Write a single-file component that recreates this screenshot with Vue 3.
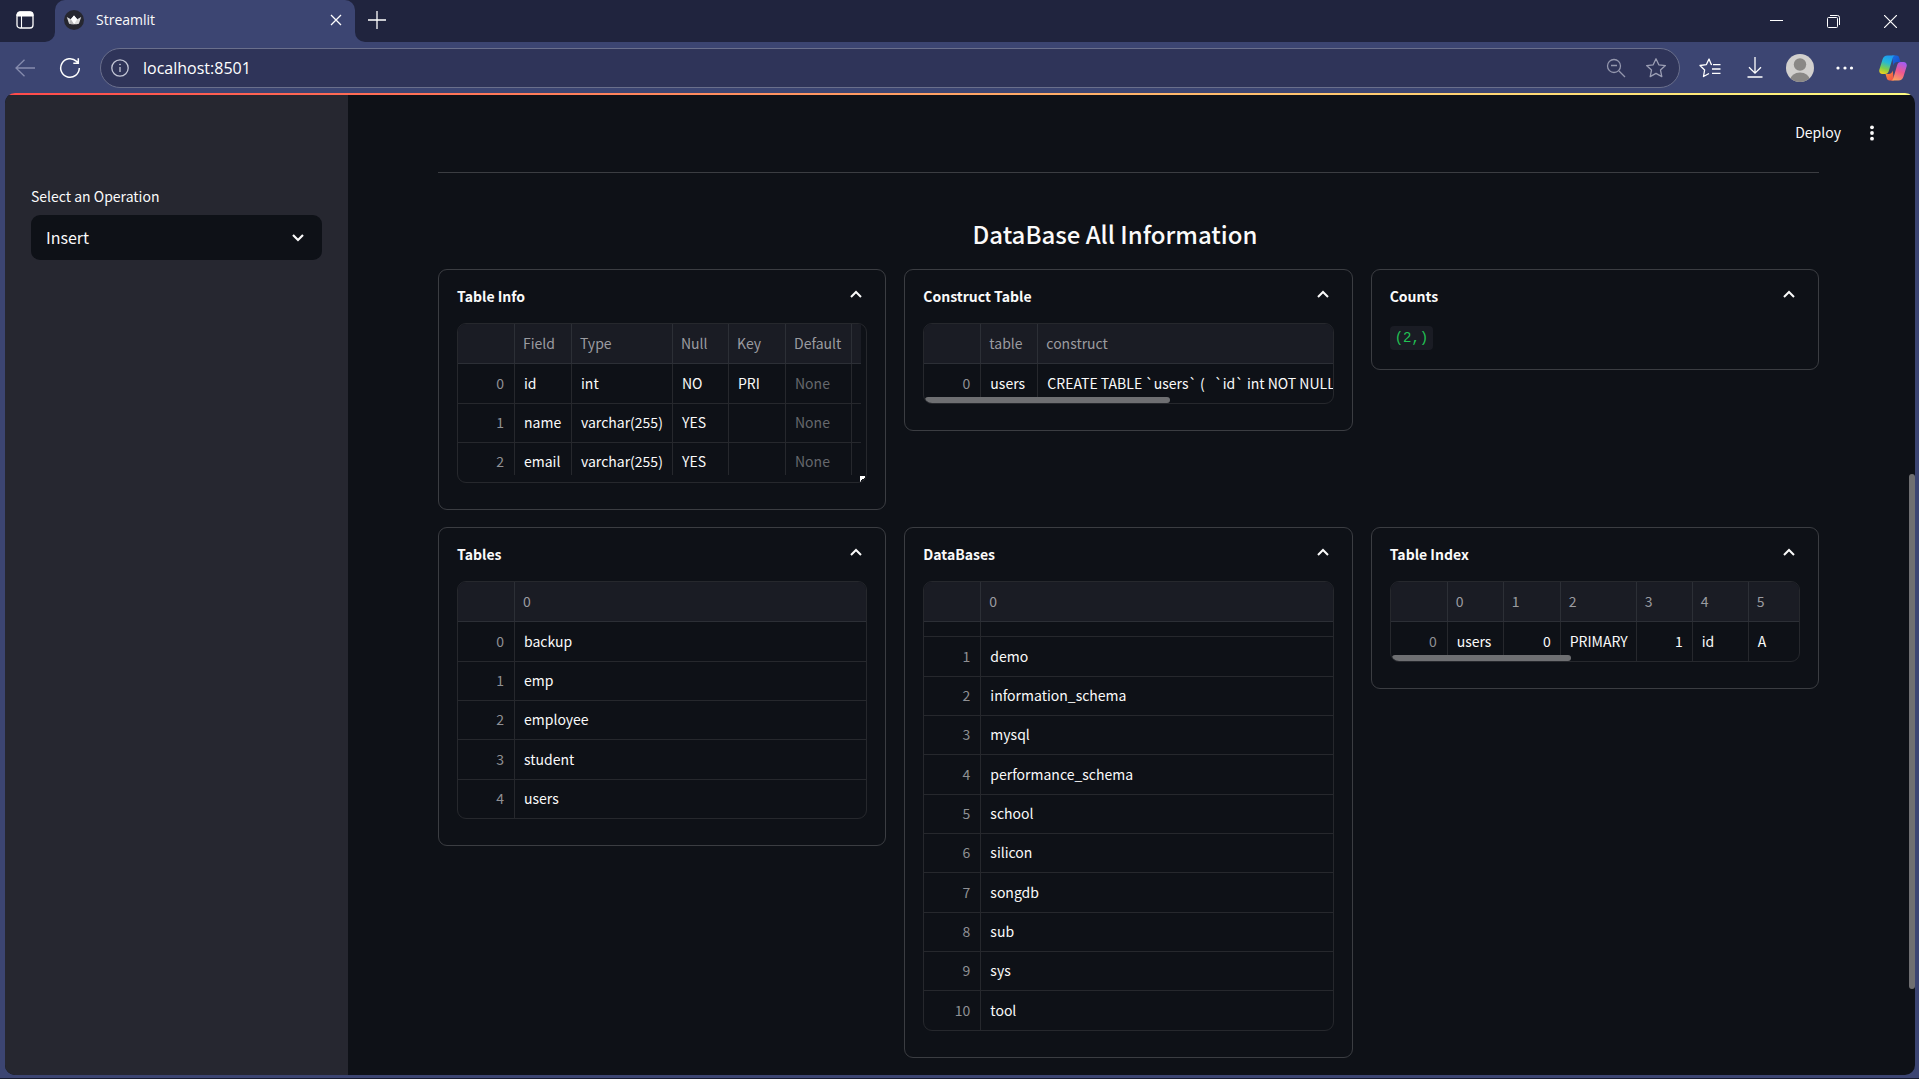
<script setup>
import { ref } from 'vue'

const operation = ref('Insert')
const operations = ['Insert', 'Update', 'Delete', 'Select']

const cards = [
  {
    title: 'Table Info',
    kind: 'resizable',
    widths: [57, 57, 101, 56, 57, 66, 0],
    head: ['', 'Field', 'Type', 'Null', 'Key', 'Default', ''],
    rows: [
      ['0', 'id', 'int', 'NO', 'PRI', 'None', ''],
      ['1', 'name', 'varchar(255)', 'YES', '', 'None', ''],
      ['2', 'email', 'varchar(255)', 'YES', '', 'None', ''],
    ],
  },
  {
    title: 'Construct Table',
    kind: 'wide',
    widths: [57, 57, 0],
    thumb: 60,
    head: ['', 'table', 'construct'],
    rows: [['0', 'users', 'CREATE TABLE `users` (   `id` int NOT NULL']],
  },
  { title: 'Counts', code: '(2,)' },
  {
    title: 'Tables',
    kind: 'plain',
    widths: [57, 0],
    head: ['', '0'],
    rows: [['0', 'backup'], ['1', 'emp'], ['2', 'employee'], ['3', 'student'], ['4', 'users']],
  },
  {
    title: 'DataBases',
    kind: 'scrolled',
    widths: [57, 0],
    head: ['', '0'],
    rows: [
      ['1', 'demo'],
      ['2', 'information_schema'],
      ['3', 'mysql'],
      ['4', 'performance_schema'],
      ['5', 'school'],
      ['6', 'silicon'],
      ['7', 'songdb'],
      ['8', 'sub'],
      ['9', 'sys'],
      ['10', 'tool'],
    ],
  },
  {
    title: 'Table Index',
    kind: 'wide',
    widths: [57, 56, 57, 76, 56, 56, 0],
    thumb: 44,
    numeric: [2, 4],
    head: ['', '0', '1', '2', '3', '4', '5'],
    rows: [['0', 'users', '0', 'PRIMARY', '1', 'id', 'A']],
  },
]

function cellClass(card, text, i) {
  return {
    index: i === 0,
    none: text === 'None',
    number: card.numeric && card.numeric.includes(i),
  }
}
</script>

<template>
  <div class="window">
    <div class="tabstrip">
      <div class="strip-left">
        <button class="icon-btn" aria-label="Tab actions">
          <svg width="20" height="20" viewBox="0 0 20 20" fill="none" stroke="#fff">
            <rect x="2" y="2" width="16" height="16" rx="3" stroke-width="1.3" />
            <path d="M2 6V5a3 3 0 0 1 3-3h10a3 3 0 0 1 3 3v1z" fill="#fff" />
            <path d="M6.5 6v12" stroke-width="1.1" />
          </svg>
        </button>
      </div>
      <div class="tab">
        <svg width="20" height="20" viewBox="0 0 20 20">
          <circle cx="10" cy="10" r="10" fill="#262730" />
          <path d="M2.8 7l4 2.300L10 5.500l3.200 3.800 4-2.300-2.300 6.800c-3 .7-6.800.7-9.800 0z" fill="#dcdcdc" />
          <path d="M10 5.500l3.200 3.800L10 14.200 6.800 9.300z" fill="#fff" />
          <path d="M6.800 9.300l3.200 4.900c-2 0-3.500-.1-4.900-.4z" fill="#b4b4b6" />
        </svg>
        <span class="tab-title">Streamlit</span>
        <button class="icon-btn tab-close" aria-label="Close tab">
          <svg width="12" height="12" viewBox="0 0 12 12" stroke="#fff" stroke-width="1.3"><path d="M1 1l10 10M11 1L1 11" /></svg>
        </button>
      </div>
      <div class="strip-right">
        <button class="icon-btn" aria-label="New tab">
          <svg width="18" height="18" viewBox="0 0 18 18" stroke="#fff" stroke-width="1.3"><path d="M9 0v18M0 9h18" /></svg>
        </button>
        <div class="controls">
          <button class="icon-btn control" aria-label="Minimize">
            <svg width="13" height="13" viewBox="0 0 13 13" stroke="#fff"><path d="M0 5.500h13" /></svg>
          </button>
          <button class="icon-btn control" aria-label="Restore">
            <svg width="14" height="14" viewBox="0 0 14 14" fill="none" stroke="#fff"><rect x=".5" y="3.500" width="10" height="10" rx="1" /><path d="M3 1.500h7.500a2 2 0 0 1 2 2V11" /></svg>
          </button>
          <button class="icon-btn control" aria-label="Close">
            <svg width="13" height="13" viewBox="0 0 13 13" stroke="#fff" stroke-width="1.2"><path d="M0 0l13 13M13 0L0 13" /></svg>
          </button>
        </div>
      </div>
    </div>

    <div class="toolbar">
      <button class="icon-btn tool" aria-label="Back">
        <svg width="20" height="18" viewBox="0 0 20 18" fill="none" stroke="#868cae" stroke-width="1.300"><path d="M20 9H1M9.500.7L1 9l8.500 8.300" /></svg>
      </button>
      <button class="icon-btn tool" aria-label="Refresh">
        <svg width="22" height="22" viewBox="0 0 22 22" fill="none" stroke="#fff" stroke-width="1.500"><path d="M20.300 11a9.300 9.300 0 1 1-2.700-6.600l1.400 1.400M19.300 1.200v5h-5" /></svg>
      </button>
      <div class="address">
        <svg width="18" height="18" viewBox="0 0 18 18" fill="none" stroke="#c3c6d6" stroke-width="1.300"><circle cx="9" cy="9" r="8.200" /><path d="M9 8v5" /><circle cx="9" cy="5.500" r=".5" fill="#c3c6d6" stroke-width=".8" /></svg>
        <input class="url" type="text" value="localhost:8501" aria-label="Address" />
        <button class="icon-btn addr-btn" aria-label="Zoom">
          <svg width="20" height="20" viewBox="0 0 20 20" fill="none" stroke="#9497ae" stroke-width="1.300"><circle cx="8" cy="8" r="6.500" /><path d="M13 13l6 6M5 7.500h6" /></svg>
        </button>
        <button class="icon-btn addr-btn" aria-label="Add to favorites">
          <svg width="22" height="22" viewBox="0 0 22 22" fill="none" stroke="#9b9eb4" stroke-width="1.300" stroke-linejoin="round"><path d="M11 1.800l2.800 6 6.600.8-4.900 4.500 1.300 6.500L11 16.400l-5.800 3.200 1.300-6.500L1.600 8.600l6.600-.8z" /></svg>
        </button>
      </div>
      <button class="icon-btn tool" aria-label="Favorites">
        <svg width="22" height="20" viewBox="0 0 22 20" fill="none" stroke="#fff" stroke-width="1.300" stroke-linejoin="round"><path d="M13 6.500l-.7-.1L10 1 7.400 6.600 1 7.500l4.600 4.500L4.500 18.500 10 15.500M14 6.700h7.500M13 11h8.500M13 15.300h8.500" /></svg>
      </button>
      <button class="icon-btn tool" aria-label="Downloads">
        <svg width="16" height="21" viewBox="0 0 16 21" fill="none" stroke="#fff" stroke-width="1.300"><path d="M8 0v16M2 10.200l6 6 6-6M.5 20h15" /></svg>
      </button>
      <button class="icon-btn tool" aria-label="Profile">
        <svg width="28" height="28" viewBox="0 0 28 28"><clipPath id="avatar"><circle cx="14" cy="14" r="14" /></clipPath><g clip-path="url(#avatar)"><rect width="28" height="28" fill="#d2d0ce" /><circle cx="14" cy="10.500" r="6.200" fill="#8a8886" /><ellipse cx="14" cy="26" rx="9.800" ry="7.500" fill="#8a8886" /></g></svg>
      </button>
      <button class="icon-btn tool" aria-label="Settings">
        <svg width="18" height="4" viewBox="0 0 18 4" fill="#fff"><circle cx="2" cy="2" r="1.600" /><circle cx="9" cy="2" r="1.600" /><circle cx="15.500" cy="2" r="1.600" /></svg>
      </button>
      <button class="icon-btn copilot" aria-label="Copilot">
        <svg width="28" height="26" viewBox="0 0 28 26">
          <defs>
            <linearGradient id="cp-a" x1="0.500" y1="0" x2="0.200" y2="1"><stop offset="0" stop-color="#1f9bf0" /><stop offset=".35" stop-color="#24b8d8" /><stop offset=".7" stop-color="#7fce4a" /><stop offset="1" stop-color="#f5d21c" /></linearGradient>
            <linearGradient id="cp-b" x1=".7" y1="0" x2=".3" y2="1"><stop offset="0" stop-color="#a45cf0" /><stop offset=".5" stop-color="#f0588e" /><stop offset="1" stop-color="#fba35c" /></linearGradient>
            <linearGradient id="cp-c" x1="0" y1="0" x2="1" y2="1"><stop offset="0" stop-color="#1a6fe0" /><stop offset="1" stop-color="#1747c8" /></linearGradient>
            <linearGradient id="cp-d" x1="0" y1="0" x2="1" y2="1"><stop offset="0" stop-color="#ff9838" /><stop offset="1" stop-color="#ee4a4a" /></linearGradient>
          </defs>
          <path d="M13 .5h4.500c1.500 0 2.300.9 2.700 2.200L21.500 7h-3c-2.500 0-3.500 1.200-4.200 3.500z" fill="url(#cp-c)" />
          <path d="M15 25.500h-4.500c-1.500 0-2.300-.9-2.700-2.200L6.500 19h3c2.500 0 3.500-1.200 4.200-3.500z" fill="url(#cp-d)" />
          <path d="M8.500.5h8c-1.700 0-2.500 1.300-3 3L9.800 16c-.6 2-1.700 3-3.600 3H3.500C.8 19-.2 17 .4 14.500L3.500 4.500C4.300 1.800 6 .5 8.500.5z" fill="url(#cp-a)" />
          <path d="M19.500 25.500h-8c1.700 0 2.500-1.300 3-3L18.200 10c.6-2 1.700-3 3.600-3h2.700c2.700 0 3.700 2 3.100 4.500l-3.100 10c-.8 2.700-2.500 4-5 4z" fill="url(#cp-b)" />
        </svg>
      </button>
    </div>

    <div class="app">
      <aside class="sidebar">
        <label class="select-label" for="operation">Select an Operation</label>
        <div class="select-wrap">
          <select id="operation" v-model="operation">
            <option v-for="o in operations" :key="o">{{ o }}</option>
          </select>
          <svg class="select-arrow" width="12" height="8" viewBox="0 0 12 8" fill="none" stroke="#fafafa" stroke-width="2.200"><path d="M1 1l5 5 5-5" /></svg>
        </div>
      </aside>

      <main class="main">
        <header class="app-header">
          <button class="deploy">Deploy</button>
          <button class="icon-btn menu" aria-label="Main menu">
            <svg width="4" height="16" viewBox="0 0 4 16" fill="#fafafa"><circle cx="2" cy="2.300" r="1.900" /><circle cx="2" cy="8" r="1.900" /><circle cx="2" cy="13.700" r="1.900" /></svg>
          </button>
        </header>
        <div class="content">
          <hr />
          <h3>DataBase All Information</h3>
          <div class="grid">
            <section v-for="card in cards" :key="card.title" class="card">
              <button class="card-head">
                <span>{{ card.title }}</span>
                <svg width="12" height="8" viewBox="0 0 12 8" fill="none" stroke="#fafafa" stroke-width="2"><path d="M1 7l5-5 5 5" /></svg>
              </button>
              <p v-if="card.code" class="code-line"><code>{{ card.code }}</code></p>
              <div v-else class="frame" :class="card.kind">
                <div class="clip">
                  <table>
                    <colgroup>
                      <col v-for="(w, i) in card.widths" :key="i" :style="{ width: w ? w + 'px' : 'auto' }" />
                    </colgroup>
                    <thead>
                      <tr><th v-for="(h, i) in card.head" :key="i">{{ h }}</th></tr>
                    </thead>
                    <tbody v-if="card.kind === 'scrolled'" class="partial">
                      <tr><td></td><td></td></tr>
                    </tbody>
                    <tbody class="rows">
                      <tr v-for="row in card.rows" :key="row[0]">
                        <td v-for="(c, i) in row" :key="i" :class="cellClass(card, c, i)">{{ c }}</td>
                      </tr>
                    </tbody>
                  </table>
                </div>
                <div v-if="card.thumb" class="thumb" :style="{ width: card.thumb + '%' }"></div>
                <div v-if="card.kind === 'resizable'" class="grip"></div>
              </div>
            </section>
          </div>
        </div>
        <div class="page-thumb"></div>
      </main>
    </div>
  </div>
</template>

<style>
html,
body {
  margin: 0;
  background: #171b2e;
}
</style>

<style scoped>
* {
  box-sizing: border-box;
}
.window {
  min-height: 100vh;
  display: flex;
  flex-direction: column;
  background: #3c4572;
  border-bottom: 1px solid #171b2e;
  font-family: "Noto Sans CJK SC", "Noto Sans", sans-serif;
  color: #fafafa;
}
button {
  border: 0;
  padding: 0;
  background: none;
  color: inherit;
  font: inherit;
}
.icon-btn {
  display: flex;
  align-items: center;
  justify-content: center;
  flex: none;
}
svg {
  display: block;
  flex: none;
}

.tabstrip {
  display: flex;
  height: 42px;
  background: linear-gradient(#20243e 20px, #3c4572 20px);
}
.strip-left {
  width: 55px;
  display: flex;
  align-items: center;
  padding: 0 0 2px 15px;
  background: #20243e;
  border-bottom-right-radius: 10px;
}
.tab {
  width: 300px;
  display: flex;
  align-items: center;
  gap: 12px;
  padding: 0 13px 2px 9px;
  background: #3c4572;
  border-radius: 10px 10px 0 0;
}
.tab-title {
  flex: 1;
  font: 14px/20px "Open Sans", "Noto Sans", sans-serif;
}
.strip-right {
  flex: 1;
  display: flex;
  align-items: center;
  justify-content: space-between;
  padding: 0 0 2px 13px;
  background: #20243e;
  border-bottom-left-radius: 10px;
}
.controls {
  display: flex;
}
.control {
  width: 57px;
  height: 40px;
  padding-top: 2px;
}

.toolbar {
  display: flex;
  align-items: center;
  height: 51px;
  padding: 0 1px 0 2px;
}
.tool {
  width: 45px;
  height: 40px;
}
.copilot {
  width: 51px;
  height: 40px;
}
.address {
  flex: 1;
  display: flex;
  align-items: center;
  height: 40px;
  margin: 0 7px 0 8px;
  padding: 0 3px 0 10px;
  background: #2f3459;
  border: 1px solid #6a6f8c;
  border-radius: 20px;
}
.url {
  flex: 1;
  min-width: 0;
  margin-left: 14px;
  padding: 0;
  border: 0;
  outline: 0;
  background: none;
  color: #fff;
  font: 16px/24px "Open Sans", "Noto Sans", sans-serif;
}
.addr-btn {
  width: 40px;
  height: 36px;
}

.app {
  flex: 1;
  display: flex;
  margin: 0 4px 3px 5px;
  border-radius: 10px;
  overflow: hidden;
  background: linear-gradient(90deg, #ff4b4b, #fffd80) top / 100% 2px no-repeat #0e1117;
}
.sidebar {
  width: 343px;
  flex: none;
  margin-top: 2px;
  padding: 90px 26px 0;
  background: #262730;
}
.select-label {
  display: block;
  font-size: 14px;
  line-height: 22px;
  margin-bottom: 8px;
}
.select-wrap {
  position: relative;
}
select {
  width: 100%;
  height: 45px;
  padding: 0 15px 2px;
  appearance: none;
  border: 0;
  border-radius: 9px;
  background: #0e1117;
  color: #fafafa;
  font: 16px/24px "Noto Sans CJK SC", "Noto Sans", sans-serif;
}
.select-arrow {
  position: absolute;
  right: 18px;
  top: 19px;
  pointer-events: none;
}

.main {
  position: relative;
  flex: 1;
  min-width: 0;
}
.app-header {
  display: flex;
  align-items: center;
  justify-content: flex-end;
  gap: 29px;
  height: 79px;
  padding-right: 41px;
}
.deploy {
  padding-bottom: 2px;
  font-size: 14px;
  line-height: 24px;
}
.content {
  padding: 0 96px 16px 90px;
}
hr {
  height: 1px;
  margin: 0;
  border: 0;
  background: #3b3d42;
}
h3 {
  margin: 0;
  padding: 43px 27px 17px 0;
  text-align: center;
  font-size: 24px;
  line-height: 36px;
  font-weight: 500;
}
.grid {
  display: grid;
  grid-template-columns: repeat(3, 1fr);
  align-items: start;
  gap: 17px 18px;
}
.card {
  min-width: 0;
  padding: 0 18px 26px;
  border: 1px solid #3b3d42;
  border-radius: 9px;
}
.card-head {
  display: flex;
  align-items: center;
  justify-content: space-between;
  width: 100%;
  height: 53px;
  padding: 0 5px 2px 0;
  font-size: 14px;
  font-weight: 600;
}
.card-head svg {
  margin-bottom: 3px;
}
.code-line {
  display: flex;
  margin: 3px 0 -7px;
}
code {
  padding: 0 5px;
  border-radius: 4px;
  background: #1a1c24;
  color: #21c354;
  font: 14px/24px "Liberation Mono", monospace;
}

.frame {
  position: relative;
  overflow: hidden;
  border: 1px solid #26282d;
  border-radius: 9px;
}
.resizable {
  height: 160px;
  padding: 0 5px 7px 0;
}
.wide {
  height: 81px;
}
.plain {
  height: 238px;
}
.scrolled {
  height: 450px;
}
.clip {
  height: 100%;
  overflow: hidden;
}
table {
  width: 100%;
  table-layout: fixed;
  border-collapse: separate;
  border-spacing: 0;
}
th,
td {
  height: 39px;
  padding: 0 9px 2px;
  border-right: 1px solid #26282d;
  border-bottom: 1px solid #26282d;
  overflow: hidden;
  white-space: pre;
  text-align: left;
  font-size: 14px;
  line-height: 20px;
  font-weight: 400;
}
th {
  height: 40px;
  padding-left: 8px;
  background: #1a1c24;
  border-color: #2c2f36;
  color: #9a9ba0;
}
th:last-child,
td:last-child {
  border-right: 0;
  padding-right: 0;
}
.rows tr:nth-child(3n + 1) td {
  height: 40px;
}
.partial td {
  height: 15px;
  padding: 0;
}
.index {
  padding-right: 10px;
  text-align: right;
  color: #8f9094;
}
.number {
  text-align: right;
}
.none {
  color: #66686d;
}
.thumb {
  position: absolute;
  left: 1px;
  bottom: 0;
  height: 6px;
  border-radius: 3px;
  background: #6e6f72;
}
.grip {
  position: absolute;
  right: 0;
  bottom: 0;
  width: 6px;
  height: 6px;
  background: linear-gradient(135deg, #fff 50%, transparent 50%);
}
.page-thumb {
  position: absolute;
  right: 0;
  top: 381px;
  width: 6px;
  height: 515px;
  border-radius: 3px;
  background: #6f6f71;
}
</style>
